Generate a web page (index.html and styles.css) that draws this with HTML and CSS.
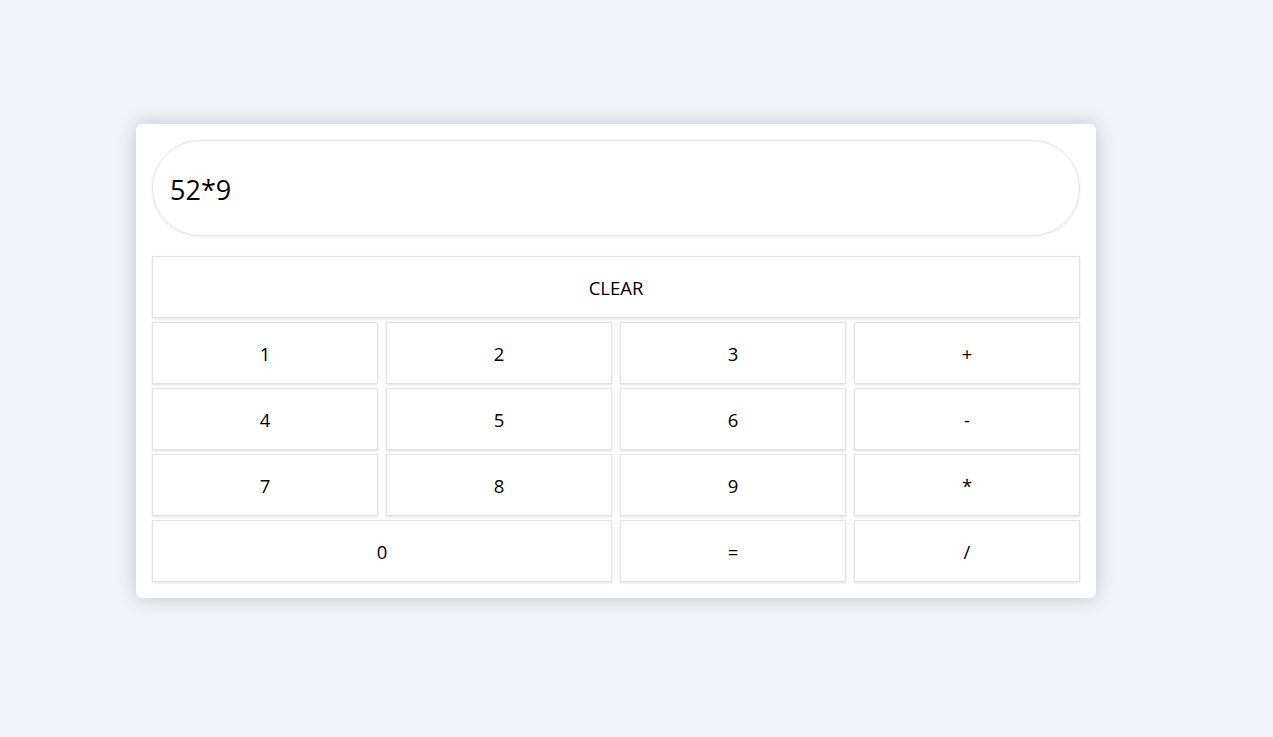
FILE: index.html
```html
<!DOCTYPE html>
<html>
<head>
<meta charset="utf-8">
<link rel="stylesheet" href="styles.css">
</head>
<body>
<div class="calc">
  <div class="display">52*9</div>
  <div class="keys">
    <button class="key wide4">CLEAR</button>
    <button class="key">1</button>
    <button class="key">2</button>
    <button class="key">3</button>
    <button class="key">+</button>
    <button class="key">4</button>
    <button class="key">5</button>
    <button class="key">6</button>
    <button class="key">-</button>
    <button class="key">7</button>
    <button class="key">8</button>
    <button class="key">9</button>
    <button class="key">*</button>
    <button class="key wide2">0</button>
    <button class="key">=</button>
    <button class="key">/</button>
  </div>
</div>
</body>
</html>
```
FILE: styles.css
```css
html, body {
  margin: 0;
  padding: 0;
}
body {
  background: #f0f3f8;
  font-family: "Open Sans", "Noto Sans", sans-serif;
  min-height: 737px;
  padding-top: 124px;
  padding-left: 136px;
  box-sizing: border-box;
}
.calc {
  width: 960px;
  box-sizing: border-box;
  background: #fff;
  border-radius: 6px;
  padding: 16px;
  box-shadow: 0 0 20px rgba(0, 0, 0, 0.2);
}
.display {
  height: 96px;
  box-sizing: border-box;
  border: 1px solid #e4e4e4;
  border-radius: 48px;
  box-shadow: 0 1px 3px rgba(0, 0, 0, 0.08);
  display: flex;
  align-items: center;
  padding-left: 17px;
  padding-top: 3px;
  font-size: 27px;
  color: #000;
  margin-bottom: 20px;
}
.keys {
  display: grid;
  grid-template-columns: repeat(4, 1fr);
  column-gap: 8px;
  row-gap: 4px;
}
.key {
  height: 62px;
  background: #fff;
  border: 1px solid #e3e3e3;
  box-shadow: 0 1px 2px rgba(0, 0, 0, 0.12);
  font-family: "Open Sans", "Noto Sans", sans-serif;
  font-size: 18.5px;
  color: #000;
  padding: 0;
  margin: 0;
}
.wide4 { grid-column: span 4; }
.wide2 { grid-column: span 2; }
```
